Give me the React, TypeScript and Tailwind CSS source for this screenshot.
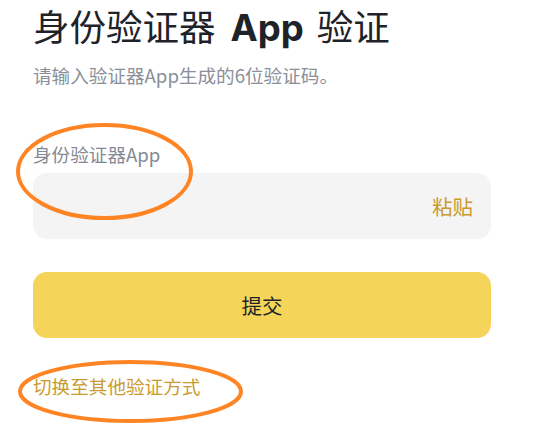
import React from "react";

export default function App() {
  return (
    <div
      className="relative w-[540px] h-[424px] bg-white overflow-hidden"
      style={{ fontFamily: '"Noto Sans CJK SC", "Noto Sans", sans-serif' }}
    >
      <div className="pl-[33px] pr-[49px] pt-[3px] flex flex-col">
        <h1 className="text-[36.5px] leading-[46px] text-[#1e2329] font-normal whitespace-nowrap">
          身份验证器
          <span className="font-bold ml-[15px] mr-[13px]" style={{ fontFamily: 'Inter, "Noto Sans CJK SC", sans-serif' }}>App</span>
          验证
        </h1>
        <p className="mt-[11px] text-[18.6px] leading-[26px] text-[#8a8f99]">
          请输入验证器App生成的6位验证码。
        </p>
        <label className="mt-[53px] text-[18.6px] leading-[26px] text-[#848a94]">
          身份验证器App
        </label>
        <div className="mt-[6px] h-[66px] rounded-[14px] bg-[#f4f4f4] flex items-center justify-end pr-[18px]">
          <span className="text-[20.5px] text-[#c99b2f]">粘贴</span>
        </div>
        <button className="mt-[33px] h-[66px] rounded-[14px] bg-[#f4d55a] flex items-center justify-center text-[20.5px] text-[#1e2329]">
          提交
        </button>
        <div className="mt-[35px] text-[18.6px] leading-[26px] text-[#c99b2f]">
          切换至其他验证方式
        </div>
      </div>
      <svg className="absolute left-0 top-0 pointer-events-none" width="540" height="424">
        <ellipse cx="104.5" cy="171.5" rx="86.5" ry="46.5" fill="none" stroke="#ff8424" strokeWidth="4" />
        <ellipse cx="130.5" cy="391.5" rx="110.5" ry="29.5" fill="none" stroke="#ff8424" strokeWidth="4" />
      </svg>
    </div>
  );
}
